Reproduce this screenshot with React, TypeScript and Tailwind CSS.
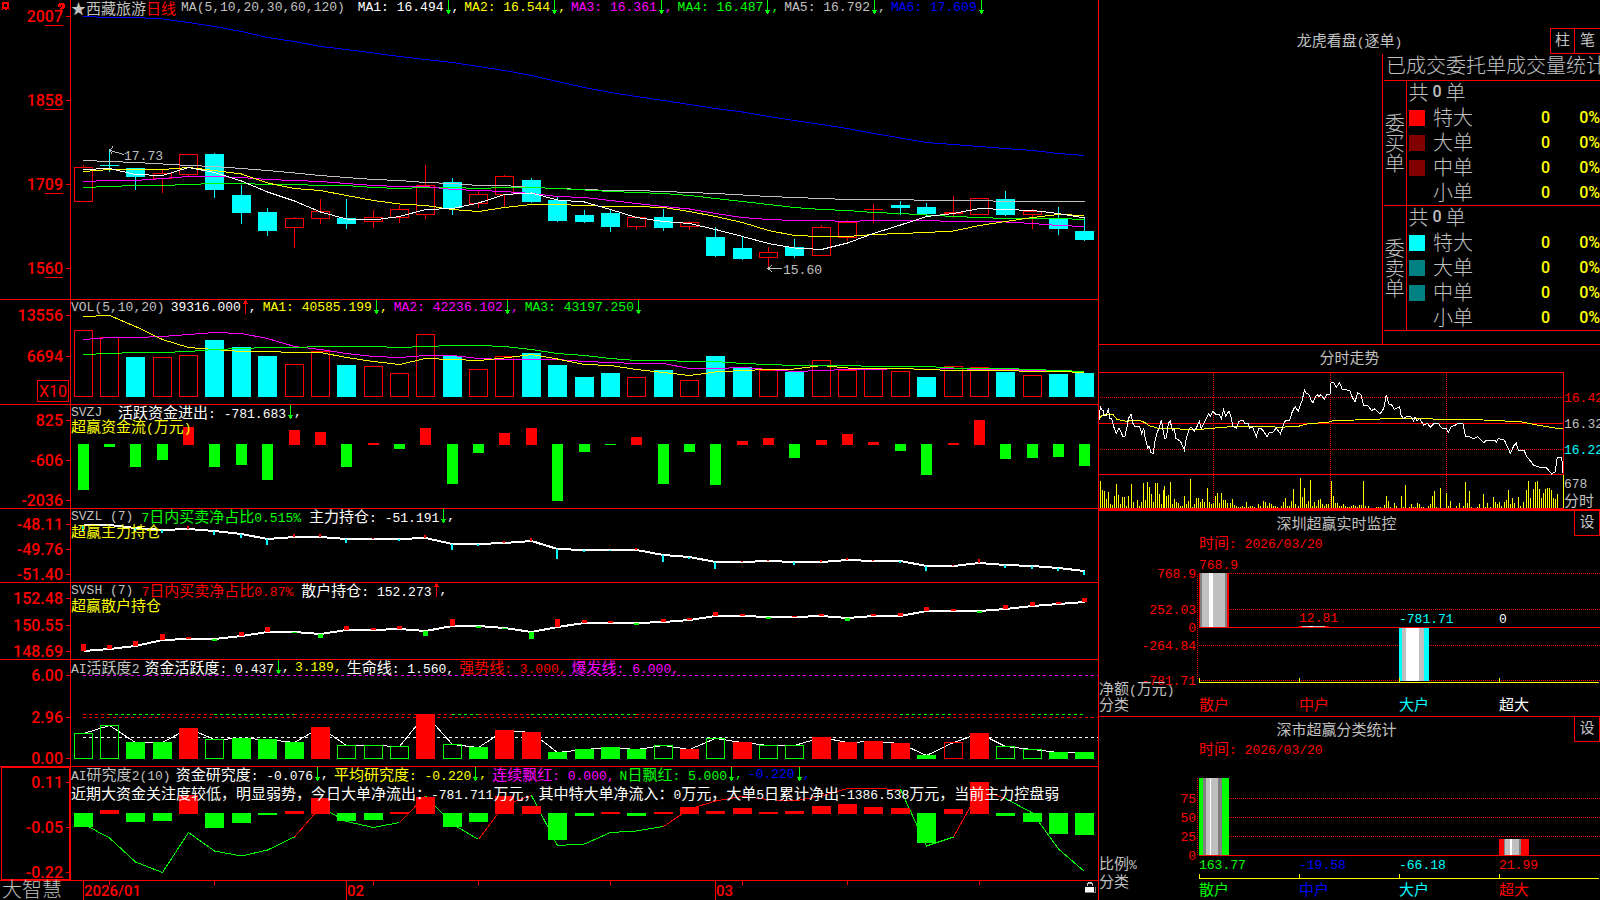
import React from "react";

const RED = "#ff0000";
const GREEN = "#00ff00";
const CYAN = "#00ffff";
const YELLOW = "#ffff00";
const MAGENTA = "#ff00ff";
const BLUE = "#0000ff";
const SILVER = "#c0c0c0";
const GRAY = "#808080";
const WHITE = "#ffffff";

const CJK = /([\u2e80-\u9fff\uff00-\uffef\u3000-\u303f\u2605]+)/;

/* ---------- text helpers ---------- */

/** Mixed text: full-width glyphs at 15px, half-width glyphs in a monospaced 13px. */
function Mix({ children }: { children: string }) {
  return (
    <>
      {children.split(CJK).filter(Boolean).map((part, i) =>
        CJK.test(part) ? (
          <span key={i} className="font-['Noto_Sans_CJK_SC',sans-serif] text-[15px]">{part}</span>
        ) : (
          <span key={i} className="font-['Liberation_Mono',monospace] text-[13px]">{part}</span>
        ),
      )}
    </>
  );
}

function SvgMix({ x, cy, fill, anchor = "start", children }: {
  x: number; cy: number; fill: string; anchor?: "start" | "end"; children: string;
}) {
  return (
    <text x={x} y={cy + 5} fill={fill} textAnchor={anchor} className="whitespace-pre">
      {children.split(CJK).filter(Boolean).map((part, i) =>
        CJK.test(part) ? (
          <tspan key={i} className="font-['Noto_Sans_CJK_SC',sans-serif] text-[15px]">{part}</tspan>
        ) : (
          <tspan key={i} className="font-['Liberation_Mono',monospace] text-[13px]">{part}</tspan>
        ),
      )}
    </text>
  );
}

function Arrow({ up = false }: { up?: boolean }) {
  return (
    <svg viewBox="0 0 8 15" className="inline-block h-[15px] w-2 shrink-0" shapeRendering="crispEdges">
      {up ? (
        <path d="M4 0h1v14h-1zM3 1h3v1h-3zM2 3h5v1h-5zM3 2h3v1h-3z" fill={RED} />
      ) : (
        <path d="M4 0h1v14h-1zM2 10h5v1h-5zM3 11h3v2h-3z" fill={GREEN} />
      )}
    </svg>
  );
}

type Item = { t: string; c: string; a?: "up" | "down"; end?: boolean };

const legendGaps = {
  tight: "flex h-[15px] items-center gap-[5px] leading-[15px]",
  wide: "flex h-[15px] items-center gap-[6px] leading-[15px]",
  wider: "flex h-[15px] items-center gap-2 leading-[15px]",
};

function Legend({ items, lead, gap = "tight", children }: {
  items: Item[]; lead?: React.ReactNode; gap?: keyof typeof legendGaps; children?: React.ReactNode;
}) {
  return (
    <div className="absolute left-0 top-0 whitespace-pre">
      <div className={legendGaps[gap]}>
        {lead}
        {items.map((it, i) => (
          <span key={i} className="flex items-center" style={{ color: it.c }}>
            <span className="flex items-baseline"><Mix>{it.t}</Mix></span>
            {it.a && <Arrow up={it.a === "up"} />}
            {it.a && !it.end && <Mix>,</Mix>}
          </span>
        ))}
      </div>
      {children}
    </div>
  );
}

function Caption({ children }: { children: string }) {
  return (
    <div className="flex h-[13px] items-center leading-[13px] text-[#ffff00]">
      <span className="flex items-baseline"><Mix>{children}</Mix></span>
    </div>
  );
}

/* ---------- chart helpers ---------- */

const cx = (i: number) => 83 + Math.floor(i * 26.36 + 0.16);
const points = (ys: number[]) => ys.map((y, i) => `${cx(i) + 0.5},${y}`).join(" ");

function Line({ ys, color, width = 1 }: { ys: number[]; color: string; width?: number }) {
  return <polyline points={points(ys)} fill="none" stroke={color} strokeWidth={width} />;
}

function Box({ i, top, bottom, half = 9, color, hollow }: {
  i: number; top: number; bottom: number; half?: number; color: string; hollow?: boolean;
}) {
  const x = cx(i) - half;
  const w = half * 2 + 1;
  return hollow ? (
    <rect x={x + 0.5} y={top + 0.5} width={w - 1} height={Math.max(bottom - top - 1, 1)} fill="none" stroke={color} />
  ) : (
    <rect x={x} y={top} width={w} height={Math.max(bottom - top, 1)} fill={color} />
  );
}

function Pane({ top, height, ticks, underline, axisExtra, legend, framed, children }: {
  top: number; height: number; ticks: [string, number][]; underline?: boolean; axisExtra?: React.ReactNode;
  legend: React.ReactNode; framed?: boolean; children: React.ReactNode;
}) {
  const inner = height - 1;
  return (
    <section className="flex border-b border-[#ff0000]">
      <svg
        viewBox={`0 ${top} 71 ${inner}`}
        style={{ height: inner }}
        className="w-[71px] shrink-0 overflow-visible"
        shapeRendering="crispEdges"
      >
        <path d={`M70.5 ${top}V${top + inner}`} stroke={RED} />
        {framed && <rect x="1.5" y={top + 0.5} width="68" height={inner - 1} fill="none" stroke={RED} />}
        {ticks.map(([label, y]) => (
          <g key={label}>
            <text x="63" y={y + 6} textAnchor="end" fill={RED} className="font-['Roboto',sans-serif] text-[16px] font-medium">
              {label}
            </text>
            <rect x="66" y={y} width="4" height="1" fill={RED} />
            {underline && <rect x="45" y={y + 9} width="18" height="1" fill={RED} />}
          </g>
        ))}
        {axisExtra}
      </svg>
      <div className="relative min-w-0 flex-1">
        <svg
          viewBox={`71 ${top} 1027 ${inner}`}
          preserveAspectRatio="none"
          style={{ height: inner }}
          className="block w-full"
          shapeRendering="crispEdges"
        >
          {children}
        </svg>
        {legend}
      </div>
    </section>
  );
}

/* ---------- data ---------- */

type Candle = [kind: "r" | "c", top: number, bottom: number, high: number, low: number];
const candles: Candle[] = [
  ["r", 167, 202, 165, 167], ["c", 165, 166, 149, 172], ["c", 168, 177, 168, 190], ["r", 173, 179, 169, 193],
  ["r", 154, 175, 154, 176], ["c", 154, 190, 153, 198], ["c", 195, 213, 185, 224], ["c", 212, 231, 208, 236],
  ["r", 218, 228, 217, 248], ["r", 211, 219, 199, 224], ["c", 218, 224, 199, 229], ["r", 217, 222, 210, 228],
  ["r", 209, 218, 205, 223], ["r", 185, 215, 165, 219], ["c", 182, 208, 178, 215], ["r", 194, 204, 191, 208],
  ["r", 176, 195, 175, 207], ["c", 180, 202, 178, 203], ["c", 200, 221, 197, 222], ["c", 215, 222, 210, 223],
  ["c", 213, 227, 209, 232], ["r", 217, 227, 216, 230], ["c", 217, 228, 209, 231], ["r", 222, 227, 221, 230],
  ["c", 237, 256, 227, 257], ["c", 248, 259, 237, 260], ["r", 252, 258, 247, 268], ["c", 247, 256, 239, 258],
  ["r", 227, 256, 225, 227], ["r", 222, 238, 220, 241], ["r", 209, 210, 204, 223], ["c", 205, 208, 201, 215],
  ["c", 207, 214, 203, 216], ["r", 212, 214, 196, 218], ["r", 198, 215, 198, 215], ["c", 199, 215, 191, 216],
  ["r", 211, 215, 209, 229], ["c", 219, 229, 207, 235], ["c", 231, 240, 217, 241],
];

const priceMa = {
  ma1: [169.5, 168.5, 174.5, 175.5, 167.5, 172.5, 181, 192, 201, 212, 219, 220, 216.5, 209.5, 208.5, 203, 194.5, 193, 200, 202, 209.5, 217.5, 221.5, 223.5, 229.5, 236.5, 243.5, 248, 249.5, 243, 233.5, 225, 216.5, 213.5, 208.5, 209.5, 210.5, 213.5, 218],
  ma2: [171.5, 169.5, 169.5, 169.5, 167.5, 170.5, 174, 183, 188.5, 190.5, 195.5, 200.5, 204, 205.5, 209.5, 211.5, 207.5, 204.5, 204.5, 205.5, 206.5, 206.5, 207.5, 211.5, 216.5, 222.5, 230.5, 235.5, 236.5, 236.5, 234.5, 233.5, 232.5, 231, 225.5, 221.5, 217.5, 214.5, 215.5],
  ma3: [181.5, 180.5, 180.5, 178.5, 176.5, 176.5, 177.5, 179.5, 180.5, 181.5, 183.5, 185.5, 186.5, 186.5, 189.5, 190.5, 191.5, 193.5, 196.5, 197.5, 200.5, 203.5, 206.5, 209, 213.5, 217.5, 219.5, 220.5, 220.5, 221.5, 220.5, 220.5, 220.5, 221.5, 221.5, 222, 223.5, 225.5, 226.5],
  ma4: [187.5, 186.5, 185.5, 185.5, 184.5, 183.5, 183.5, 184.5, 184.5, 185.5, 185.5, 187.5, 188.5, 187.5, 187.5, 188.5, 187.5, 187.5, 188.5, 190, 191.5, 192.5, 193.5, 195.5, 198.5, 201.5, 204.5, 207.5, 209.5, 210.5, 212.5, 213.5, 215, 216.5, 217.5, 218.5, 218.5, 218.5, 219.5],
  ma5: [160.5, 161.5, 162.5, 164, 165.5, 166.5, 168.5, 170.5, 173, 175.5, 177.5, 179.5, 180.5, 182.5, 183.5, 185.5, 185.5, 187.5, 188.5, 189.5, 190.5, 190.5, 191.5, 192.5, 193.5, 195, 196.5, 197.5, 198.5, 199.5, 199.5, 199.5, 200.5, 200.5, 200.5, 201.5, 201.5, 201.5, 201.5],
  ma6: [16.5, 17.5, 17.5, 19, 22.5, 26.5, 31.5, 37.5, 41.5, 46.5, 49.5, 53, 56.5, 59.5, 62.5, 66.5, 70.5, 75.5, 81.5, 87.5, 92.5, 96.5, 100.5, 104.5, 108.5, 112, 116.5, 120.5, 124.5, 128.5, 133.5, 138, 142.5, 144.5, 146.5, 148.5, 150.5, 153.5, 155.5],
};

const volume: [string, number][] = [
  ["r", 330], ["r", 337], ["c", 357], ["r", 357], ["r", 355], ["c", 340], ["c", 347], ["c", 356], ["r", 364], ["r", 351],
  ["c", 365], ["r", 366], ["r", 373], ["r", 334], ["c", 356], ["r", 369], ["r", 356], ["c", 353], ["c", 365], ["c", 377],
  ["c", 373], ["r", 377], ["c", 370], ["r", 380], ["c", 356], ["c", 367], ["r", 370], ["c", 372], ["r", 360], ["r", 370],
  ["r", 369], ["r", 371], ["c", 377], ["r", 366], ["r", 367], ["c", 372], ["r", 375], ["c", 374], ["c", 373],
];

const volMa = {
  ma1: [316.5, 315.5, 326.5, 339.5, 347.5, 349.5, 351.5, 351.5, 352.5, 352.5, 357.5, 361.5, 364.5, 358.5, 359.5, 360.5, 358, 354.5, 359, 364.5, 365.5, 369.5, 372.5, 375.5, 372, 370.5, 369.5, 369, 365.5, 368, 368.5, 368.5, 369.5, 370.5, 370.5, 370.5, 371.5, 371.5, 372.5],
  ma2: [339.5, 337.5, 337.5, 336.5, 334.5, 332.5, 333.5, 338.5, 346.5, 349.5, 353.5, 356.5, 357.5, 355.5, 355.5, 358.5, 359.5, 359.5, 359.5, 361.5, 362.5, 363.5, 363.5, 368.5, 368.5, 367.5, 369.5, 371.5, 370.5, 369.5, 369.5, 368.5, 369.5, 368.5, 369.5, 369.5, 370.5, 370.5, 371.5],
  ma3: [354.5, 353.5, 352.5, 352.5, 351.5, 349.5, 348.5, 347.5, 347.5, 346.5, 346.5, 346.5, 347.5, 346.5, 345.5, 345.5, 346.5, 349.5, 353.5, 355.5, 358.5, 360.5, 360.5, 361.5, 361.5, 363.5, 364.5, 365.5, 365.5, 365.5, 366.5, 366.5, 366.5, 368, 368.5, 368.5, 369.5, 370.5, 371.5],
};

const flow = [490, 447, 467, 460, 427, 467, 465, 480, 430, 432, 467, 443, 449, 428, 484, 453, 433, 428, 501, 452, 445, 437, 484, 452, 485, 441, 438, 458, 440, 434, 442, 451, 475, 443, 420, 459, 458, 457, 466];
const flowDown = new Set([20]);

const mainHold = [525, 525, 528, 530, 529, 531, 534, 539, 537, 537, 539, 539, 539, 538, 544, 544, 543, 541, 549, 550, 550, 550, 555, 557, 562, 562, 561, 562, 562, 560, 561, 561, 566, 566, 563, 565, 566, 568, 571];
const mainTicks = [-6, -1, -3, -3, 3, -4, -4, -6, 3, 3, -4, 1, -2, 3, -6, -2, 2, 3, -10, -2, -1, 2, -7, -2, -7, 1, 1, -3, 2, 2, 1, -2, -5, 1, 4, -3, -3, -3, -4];

const retailHold = [651, 649, 646, 640, 639, 639, 636, 632, 632, 634, 630, 630, 629, 631, 626, 626, 628, 632, 627, 623, 623, 623, 622, 620, 616, 616, 617, 617, 616, 618, 616, 616, 611, 611, 611, 609, 606, 604, 602];
const retailTicks = [7, 4, 5, 6, 2, -2, 4, 5, -1, -4, 4, 2, 3, -5, 7, -2, -1, -7, 8, 3, 2, -2, 3, 2, 4, 2, -2, 1, 2, -3, 2, 3, 4, 2, -2, 4, 4, 2, 4];

/* Upper case = filled bar, lower case = outlined bar. */
const activity: [string, number][] = [
  ["g", 733], ["g", 725], ["G", 742], ["G", 742], ["R", 728], ["g", 739], ["G", 738], ["G", 739], ["G", 742], ["R", 727],
  ["g", 745], ["g", 745], ["g", 746], ["R", 714], ["g", 744], ["G", 747], ["R", 730], ["R", 732], ["G", 752], ["G", 749],
  ["G", 747], ["G", 749], ["g", 745], ["R", 749], ["g", 738], ["R", 742], ["g", 745], ["g", 745], ["R", 737], ["R", 742],
  ["R", 741], ["R", 743], ["G", 755], ["r", 742], ["R", 733], ["g", 746], ["g", 749], ["G", 752], ["G", 752],
];
const activityTrend: [number, number, string][] = [
  [0, 1, RED], [1, 3, GREEN], [3, 5, RED], [5, 8, GREEN], [8, 14, RED], [14, 15, GREEN], [15, 17, RED],
  [17, 21, GREEN], [21, 31, RED], [31, 33, GREEN], [33, 36, RED], [36, 38, GREEN],
];

const research = [827, 810, 822, 821, 795, 828, 823, 815, 811, 798, 821, 820, 812, 797, 827, 822, 796, 806, 840, 816, 812, 816, 812, 807, 811, 808, 812, 811, 806, 804, 807, 808, 843, 809, 782, 816, 822, 834, 835];
const researchDown = new Set([1, 8, 12, 20, 22, 26, 27]);
const researchLine = [824, 838, 862, 872.5, 832.5, 851, 856, 850, 837, 807, 821.5, 827.5, 822.5, 796, 824, 839.5, 805, 795.5, 845.5, 844, 832.5, 831, 826.5, 809, 801, 796.5, 799.5, 801, 796, 788.5, 788.5, 789.5, 846, 837, 790, 798.5, 813, 849, 871.5];
const researchParts: [number, number, string][] = [
  [0, 8, GREEN], [8, 9, RED], [9, 12, GREEN], [12, 13, RED], [13, 15, GREEN], [15, 17, RED],
  [17, 22, GREEN], [22, 31, RED], [31, 33, GREEN], [33, 35, RED], [35, 38, GREEN],
];

/* ---------- left side panes ---------- */

function PricePane() {
  return (
    <Pane
      top={0}
      height={300}
      underline
      ticks={[["2007", 16], ["1858", 100], ["1709", 184], ["1560", 268]]}
      axisExtra={
        <>
          <path d="M3 3h5v5h-5z" fill="none" stroke={RED} strokeWidth="2" />
          <path d="M2 9h1v1h-1zM9 9h1v1h-1zM5 9h2v1h-2z" fill={RED} />
          <path d="M58 4h1v-1h5v1h1v4h-1v1h-2v2h-2v-3h1v-1h1v-2h-1v2h-3zM60 12h2v3h-2z" fill={RED} />
        </>
      }
      legend={
        <Legend
          lead={
            <span className="flex items-baseline text-[#c0c0c0]">
              <Mix>★西藏旅游</Mix>
              <span className="text-[#ff0000]"><Mix>日线</Mix></span>
            </span>
          }
          items={[
            { t: "MA(5,10,20,30,60,120) ", c: SILVER },
            { t: "MA1: 16.494", c: WHITE, a: "down" },
            { t: "MA2: 16.544", c: YELLOW, a: "down" },
            { t: "MA3: 16.361", c: MAGENTA, a: "down" },
            { t: "MA4: 16.487", c: GREEN, a: "down" },
            { t: "MA5: 16.792", c: SILVER, a: "down" },
            { t: "MA6: 17.609", c: BLUE, a: "down", end: true },
          ]}
        />
      }
    >
      {candles.map(([k, top, bottom, high, low], i) => {
        const color = k === "r" ? RED : CYAN;
        return (
          <g key={i}>
            {high < top && <rect x={cx(i)} y={high} width="1" height={top - high} fill={color} />}
            {low > bottom && <rect x={cx(i)} y={bottom} width="1" height={low - bottom} fill={color} />}
            <Box i={i} top={top} bottom={bottom} color={color} hollow={k === "r" && bottom - top > 1} />
          </g>
        );
      })}
      <Line ys={priceMa.ma6} color={BLUE} />
      <Line ys={priceMa.ma5} color={SILVER} />
      <Line ys={priceMa.ma4} color={GREEN} />
      <Line ys={priceMa.ma3} color={MAGENTA} />
      <Line ys={priceMa.ma2} color={YELLOW} />
      <Line ys={priceMa.ma1} color={WHITE} />
      <path d="M124 154.5L110 150.5M113 146.5L110 150.5L112 153.5" fill="none" stroke={SILVER} />
      <SvgMix x={124} cy={155} fill={SILVER}>17.73</SvgMix>
      <path d="M782 268.5H768M772 265L768 268.5L772 272" fill="none" stroke={SILVER} />
      <SvgMix x={783} cy={269} fill={SILVER}>15.60</SvgMix>
    </Pane>
  );
}

function VolumePane() {
  return (
    <Pane
      top={300}
      height={105}
      ticks={[["13556", 315], ["6694", 356]]}
      axisExtra={
        <>
          <rect x="37.5" y="380.5" width="31" height="21" fill="none" stroke={RED} />
          <text x="39" y="397" fill={RED} className="font-['Roboto',sans-serif] text-[16px]">X10</text>
        </>
      }
      legend={
        <Legend
          gap="wide"
          items={[
            { t: "VOL(5,10,20)", c: SILVER },
            { t: "39316.000", c: WHITE, a: "up" },
            { t: "MA1: 40585.199", c: YELLOW, a: "down" },
            { t: "MA2: 42236.102", c: MAGENTA, a: "down" },
            { t: "MA3: 43197.250", c: GREEN, a: "down", end: true },
          ]}
        />
      }
    >
      {volume.map(([k, top], i) => (
        <Box key={i} i={i} top={top} bottom={397} color={k === "r" ? RED : CYAN} hollow={k === "r"} />
      ))}
      <Line ys={volMa.ma2} color={MAGENTA} />
      <Line ys={volMa.ma1} color={YELLOW} />
      <Line ys={volMa.ma3} color={GREEN} />
    </Pane>
  );
}

function FlowPane() {
  return (
    <Pane
      top={405}
      height={104}
      ticks={[["825", 420], ["-606", 460], ["-2036", 500]]}
      legend={
        <Legend
          gap="wider"
          items={[
            { t: "SVZJ ", c: SILVER },
            { t: "活跃资金进出: -781.683", c: WHITE, a: "down" },
          ]}
        >
          <Caption>超赢资金流(万元)</Caption>
        </Legend>
      }
    >
      {flow.map((v, i) =>
        v > 445 || flowDown.has(i) ? (
          <Box key={i} i={i} top={444} bottom={v} half={5} color={GREEN} />
        ) : (
          <Box key={i} i={i} top={v} bottom={445} half={5} color={RED} />
        ),
      )}
    </Pane>
  );
}

function MainHoldPane() {
  return (
    <Pane
      top={509}
      height={74}
      ticks={[["-48.11", 524], ["-49.76", 549], ["-51.40", 574]]}
      legend={
        <Legend
          gap="wider"
          items={[
            { t: "SVZL (7)", c: SILVER },
            { t: "7日内买卖净占比0.515%", c: GREEN },
            { t: "主力持仓: -51.191", c: WHITE, a: "down" },
          ]}
        >
          <Caption>超赢主力持仓</Caption>
        </Legend>
      }
    >
      <Line ys={mainHold} color={WHITE} width={2} />
      {mainTicks.map((h, i) => (
        <rect
          key={i}
          x={cx(i) - 1}
          y={h > 0 ? mainHold[i] - h : mainHold[i]}
          width="2"
          height={Math.abs(h)}
          fill={h > 0 ? RED : CYAN}
        />
      ))}
    </Pane>
  );
}

function RetailHoldPane() {
  return (
    <Pane
      top={583}
      height={77}
      ticks={[["152.48", 598], ["150.55", 625], ["148.69", 651]]}
      legend={
        <Legend
          gap="wider"
          items={[
            { t: "SVSH (7)", c: SILVER },
            { t: "7日内买卖净占比0.87%", c: RED },
            { t: "散户持仓: 152.273", c: WHITE, a: "up" },
          ]}
        >
          <Caption>超赢散户持仓</Caption>
        </Legend>
      }
    >
      <Line ys={retailHold} color={WHITE} width={2} />
      {retailTicks.map((h, i) => (
        <rect
          key={i}
          x={cx(i) - 2}
          y={h > 0 ? retailHold[i] - h : retailHold[i]}
          width="5"
          height={Math.abs(h)}
          fill={h > 0 ? RED : GREEN}
        />
      ))}
    </Pane>
  );
}

function ActivityPane() {
  return (
    <Pane
      top={660}
      height={107}
      ticks={[["6.00", 675], ["2.96", 717], ["0.00", 758]]}
      legend={
        <Legend
          items={[
            { t: "AI活跃度2", c: SILVER },
            { t: "资金活跃度: 0.437", c: WHITE, a: "down" },
            { t: "3.189,", c: YELLOW },
            { t: "生命线: 1.560,", c: WHITE },
            { t: "强势线: 3.000,", c: RED },
            { t: "爆发线: 6.000,", c: MAGENTA },
          ]}
        />
      }
    >
      <path d="M83 675.5H1098" stroke={MAGENTA} strokeDasharray="3 3" />
      <path d="M83 717.5H1098" stroke={RED} strokeDasharray="3 3" />
      {activityTrend.map(([a, b, c]) => (
        <path key={a} d={`M${cx(a)} 714.5H${cx(b)}`} stroke={c} strokeDasharray="3 3" />
      ))}
      <path d="M83 737.5H1098" stroke={WHITE} strokeDasharray="3 3" />
      <Line ys={activity.map(([, y]) => y + 0.5)} color={WHITE} />
      {activity.map(([k, top], i) => (
        <Box
          key={i}
          i={i}
          top={top}
          bottom={759}
          color={k.toLowerCase() === "r" ? RED : GREEN}
          hollow={k === k.toLowerCase()}
        />
      ))}
    </Pane>
  );
}

function ResearchPane() {
  return (
    <Pane
      top={767}
      height={114}
      framed
      ticks={[["0.11", 782], ["-0.05", 827], ["-0.22", 872]]}
      legend={
        <Legend
          items={[
            { t: "AI研究度2(10)", c: SILVER },
            { t: "资金研究度: -0.076", c: WHITE, a: "down" },
            { t: "平均研究度: -0.220", c: YELLOW, a: "down" },
            { t: "连续飘红: 0.000,", c: MAGENTA },
            { t: "N日飘红: 5.000", c: GREEN, a: "down" },
            { t: "-0.220", c: BLUE, a: "down" },
          ]}
        >
          <div className="mt-1 flex h-[15px] items-center leading-[15px] text-white">
            <span className="flex items-baseline">
              <Mix>近期大资金关注度较低，明显弱势，今日大单净流出：-781.711万元，其中特大单净流入：0万元，大单5日累计净出-1386.538万元，当前主力控盘弱</Mix>
            </span>
          </div>
        </Legend>
      }
    >
      {researchParts.map(([a, b, c]) => (
        <polyline
          key={a}
          points={researchLine.slice(a, b + 1).map((y, j) => `${cx(a + j) + 0.5},${y}`).join(" ")}
          fill="none"
          stroke={c}
        />
      ))}
      {research.map((v, i) =>
        v > 813 && !researchDown.has(i) ? (
          <Box key={i} i={i} top={813} bottom={v} color={GREEN} />
        ) : (
          <Box key={i} i={i} top={v} bottom={814} color={RED} />
        ),
      )}
    </Pane>
  );
}

function TimeAxis() {
  const months: [string, number][] = [["2026/01", 83], ["02", 346], ["03", 715]];
  return (
    <footer className="flex h-[19px]">
      <div className="w-[71px] shrink-0 whitespace-nowrap pl-[2px] font-['Noto_Sans_CJK_SC',sans-serif] text-[20px] font-light leading-[16px] text-[#c0c0c0]">
        大智慧
      </div>
      <svg viewBox="71 881 1027 19" preserveAspectRatio="none" className="h-[19px] min-w-0 flex-1" shapeRendering="crispEdges">
        {[109, 214, 373, 478, 610, 742, 847, 979].map((x) => (
          <rect key={x} x={x} y="881" width="1" height="4" fill={RED} />
        ))}
        {months.map(([m, x]) => (
          <g key={m}>
            <rect x={x} y="881" width="1" height="19" fill={RED} />
            <text x={x + 1} y="896" fill={RED} className="font-['Roboto',sans-serif] text-[15px] font-medium">{m}</text>
          </g>
        ))}
        <path d="M1087 886v-3h1v-1h4v1h1v3h-1v-2h-4v2z" fill={SILVER} />
        <rect x="1085" y="887" width="9" height="5" fill={WHITE} />
        <path d="M1085 893h11v-6h-1v5h-10z" fill={GRAY} />
      </svg>
    </footer>
  );
}

/* ---------- right side ---------- */

const orderGroups = [
  { name: "委买单", colors: ["#ff0000", "#800000", "#800000", "transparent"] },
  { name: "委卖单", colors: ["#00ffff", "#008080", "#008080", "transparent"] },
];
const orderSizes = ["特大", "大单", "中单", "小单"];

function OrderStats() {
  return (
    <section className="flex h-[345px] flex-col border-b border-[#ff0000] text-[#c0c0c0]">
      <header className="mt-7 grid h-[26px] shrink-0 grid-cols-[1fr_auto_1fr] items-start">
        <h2 className="col-start-2 flex h-[26px] items-baseline leading-[24px]"><Mix>龙虎看盘(逐单)</Mix></h2>
        <div className="flex justify-self-end">
          <button type="button" className="h-[26px] w-[25px] border border-[#ff0000] pb-1 leading-[18px]"><Mix>柱</Mix></button>
          <button type="button" className="h-[26px] w-[25px] border-y border-[#ff0000] pb-1 leading-[18px]"><Mix>笔</Mix></button>
        </div>
      </header>
      <div className="ml-auto w-[218px] flex-1 overflow-hidden border-l border-[#ff0000] pl-px font-['Noto_Sans_CJK_SC',sans-serif] text-[20px] font-light">
        <h3 className="h-[26px] whitespace-nowrap pl-[2px] leading-[22px]">已成交委托单成交量统计</h3>
        <table className="w-full table-fixed border-collapse leading-[22px]">
          <colgroup>
            <col className="w-[22px]" />
            <col className="w-[27px]" />
            <col />
            <col className="w-[50px]" />
            <col className="w-[50px]" />
          </colgroup>
          {orderGroups.map((g) => (
            <tbody key={g.name} className="border-y border-[#ff0000]">
              <tr className="h-[25px]">
                <th rowSpan={5} className="border-r border-[#ff0000] p-0 text-center align-middle font-light leading-[20px]">
                  {g.name.split("").map((ch) => <span key={ch} className="block">{ch}</span>)}
                </th>
                <td colSpan={4} className="p-0 pl-[2px] align-top">
                  <span className="flex h-[22px] items-center whitespace-nowrap">
                    共<span className="px-1 font-['Roboto',sans-serif] text-[16px] font-medium">0</span>单
                  </span>
                </td>
              </tr>
              {orderSizes.map((s, i) => (
                <tr key={s} className="h-[25px]">
                  <td className="p-0 pl-[2px]">
                    <span className="block h-4 w-4" style={{ backgroundColor: g.colors[i] }} />
                  </td>
                  <td className="p-0 align-top">
                    <span className="block h-[22px] whitespace-nowrap">{s}</span>
                  </td>
                  <td className="p-0 align-middle font-['Roboto',sans-serif] text-[16px] font-medium text-[#ffff00]">
                    <span className="block h-[22px] text-right">0</span>
                  </td>
                  <td className="p-0 align-middle font-['Roboto',sans-serif] text-[16px] font-medium text-[#ffff00]">
                    <span className="block h-[22px] text-right">0%</span>
                  </td>
                </tr>
              ))}
            </tbody>
          ))}
        </table>
      </div>
    </section>
  );
}

/* Samples on a grid of thirds of a pixel, measured from the chart's left edge and top. */
const intraday = "12,240 16,200 22,212 25,212 27,228 34,226 40,209 45,236 50,236 58,266 64,281 72,264 84,290 90,288 96,260 100,236 108,223 114,250 120,260 134,260 140,281 146,264 150,290 158,324 162,318 168,338 175,340 180,304 188,272 192,268 199,240 204,270 209,295 214,294 220,250 226,244 232,272 238,268 243,296 256,303 268,330 275,290 282,270 288,260 298,274 304,264 313,244 319,266 331,240 340,222 346,228 354,214 362,222 372,222 379,236 386,209 392,228 402,213 408,232 414,260 424,264 432,244 443,240 450,250 460,250 464,264 472,260 484,290 492,264 502,268 516,290 524,276 534,276 544,264 556,281 562,266 568,246 576,240 584,242 590,220 600,200 610,214 618,188 622,180 628,150 634,160 642,164 648,180 654,188 662,170 666,164 672,170 678,164 688,178 695,164 705,162 708,128 716,128 724,142 733,128 742,148 756,150 764,150 770,168 780,186 788,158 798,164 806,196 818,196 830,212 838,206 855,222 866,206 874,164 882,192 892,196 898,208 914,200 918,226 926,236 934,230 948,230 956,244 960,232 966,242 974,236 986,256 998,250 1006,262 1018,250 1030,250 1040,264 1054,266 1060,278 1068,260 1080,256 1090,250 1104,252 1111,288 1124,290 1136,296 1148,290 1166,308 1174,300 1200,300 1204,308 1210,296 1228,300 1246,340 1256,318 1264,310 1270,330 1288,332 1295,350 1306,362 1316,376 1334,382 1352,382 1362,392 1370,402 1380,396 1387,352 1400,352 1404,398";
const average = "12,240 20,226 34,224 54,224 66,238 96,244 110,241 134,241 150,248 162,257 186,264 240,266 270,268 320,268 340,265 380,263 410,259 520,259 550,262 610,259 640,251 700,247 715,242 780,240 880,236 1010,236 1020,238 1155,238 1165,240 1230,243 1280,246 1310,252 1350,259 1380,264 1404,266";
const ticksVolume = "16,423 22,451 28,453 34,477 40,456 46,491 52,494 58,468 64,432 70,466 76,491 82,472 88,471 94,497 100,468 108,432 114,485 120,503 127,480 133,499 139,487 145,429 151,480 157,426 163,441 169,461 175,486 181,429 187,429 193,463 199,491 205,450 208,438 214,468 220,464 226,426 232,491 238,478 244,486 250,490 256,499 262,499 268,468 274,491 280,483 286,417 292,501 298,491 304,474 310,474 316,485 322,478 328,485 337,444 343,487 349,491 355,488 361,468 367,459 373,488 379,459 385,480 391,480 397,490 406,490 412,477 418,495 424,498 430,501 436,500 442,498 448,500 454,486 460,501 466,499 472,499 478,501 484,503 490,491 496,497 505,483 511,486 517,497 523,488 529,491 535,497 541,499 547,500 553,503 559,498 565,487 571,474 577,497 583,499 589,483 595,447 601,491 610,497 616,414 622,472 628,444 634,491 640,484 646,420 652,497 658,486 664,497 670,480 676,478 682,491 688,497 694,491 700,491 709,423 715,468 721,488 727,490 733,497 739,499 745,493 751,498 757,500 763,500 769,497 775,494 781,499 787,500 793,495 799,495 805,423 811,499 820,499 832,503 844,500 850,500 856,501 862,503 868,495 874,468 880,483 886,500 898,489 904,497 910,504 919,468 925,500 931,435 937,503 943,501 949,491 955,500 961,501 967,488 973,491 979,500 985,502 991,503 1000,497 1006,491 1012,469 1018,453 1024,502 1036,444 1054,459 1060,497 1066,483 1075,503 1084,499 1093,488 1105,497 1111,426 1117,489 1123,453 1129,500 1147,502 1153,491 1165,462 1171,500 1177,488 1186,500 1195,471 1201,485 1207,491 1213,485 1219,497 1228,486 1234,479 1240,450 1246,491 1252,474 1258,488 1270,471 1276,497 1285,485 1294,450 1300,423 1306,474 1314,447 1321,426 1327,423 1333,447 1339,474 1345,459 1351,447 1357,444 1363,444 1369,450 1375,474 1381,477 1387,462 1404,405";

const parse = (s: string) =>
  s.split(" ").map((p) => {
    const [x, y] = p.split(",").map(Number);
    return [1095 + x / 3, 340 + y / 3];
  });

function IntradayPanel() {
  return (
    <section className="border-b border-[#ff0000] text-[#c0c0c0]">
      <h2 className="h-[27px] text-center leading-[24px]"><Mix>分时走势</Mix></h2>
      <svg viewBox="1099 372 501 137" className="block h-[137px] w-full" shapeRendering="crispEdges">
        <g fill="none" stroke={RED}>
          <path d="M1099 372.5H1563.5V474.5H1099M1099 423.5H1563" />
          <path d="M1100 397.5H1563M1100 449.5H1563" strokeDasharray="1 1" />
          <path d="M1213.5 373V508M1330.5 373V508M1446.5 373V508" strokeDasharray="1 1" />
        </g>
        {parse(ticksVolume).map(([x, y], i) => (
          <rect key={i} x={Math.floor(x)} y={Math.round(y)} width="1" height={509 - Math.round(y)} fill={YELLOW} />
        ))}
        <rect x="1099" y="508" width="465" height="1" fill={RED} />
        <polyline points={parse(average).map((p) => p.join(",")).join(" ")} fill="none" stroke={YELLOW} />
        <polyline points={parse(intraday).map((p) => p.join(",")).join(" ")} fill="none" stroke={WHITE} />
        <SvgMix x={1564} cy={397} fill={RED}>16.42</SvgMix>
        <SvgMix x={1564} cy={423} fill={SILVER}>16.32</SvgMix>
        <SvgMix x={1564} cy={449} fill={CYAN}>16.22</SvgMix>
        <SvgMix x={1564} cy={483} fill={SILVER}>678</SvgMix>
        <SvgMix x={1564} cy={501} fill={SILVER}>分时</SvgMix>
      </svg>
    </section>
  );
}

/* Each stripe is [start, colour] measured from the bar's left edge; every bar is 30px wide. */
function StripedBar({ x, y, h, stripes }: { x: number; y: number; h: number; stripes: [number, string][] }) {
  return (
    <g>
      {stripes.map(([s, c], i) => (
        <rect key={s} x={x + s} y={y} width={(stripes[i + 1]?.[0] ?? 30) - s} height={h} fill={c} />
      ))}
    </g>
  );
}

function PanelHeader({ title }: { title: string }) {
  return (
    <header className="flex h-[25px] text-[#c0c0c0]">
      <h2 className="flex-1 text-center leading-[23px]"><Mix>{title}</Mix></h2>
      <button type="button" className="h-[25px] w-[26px] border-x border-b border-[#ff0000] pb-1 leading-[18px]"><Mix>设</Mix></button>
    </header>
  );
}

function YellowAxis({ y }: { y: number }) {
  return (
    <path
      d={`M1199.5 ${y - 4}V${y + 0.5}H1599M1299.5 ${y - 4}V${y}M1399.5 ${y - 4}V${y}M1499.5 ${y - 4}V${y}`}
      fill="none"
      stroke={YELLOW}
    />
  );
}

function MonitorPanel() {
  return (
    <section className="border-b border-t border-[#ff0000]">
      <PanelHeader title="深圳超赢实时监控" />
      <svg viewBox="1099 536 501 180" className="block h-[180px] w-full" shapeRendering="crispEdges">
        <SvgMix x={1199} cy={543} fill={RED}>时间: 2026/03/20</SvgMix>
        <g fill="none" stroke={RED}>
          <path d="M1197.5 574V680M1229 573.5H1600M1229 609.5H1600M1199 645.5H1600M1199 680.5H1600" strokeDasharray="1 1" />
        </g>
        <StripedBar
          x={1199}
          y={573}
          h={54}
          stripes={[[0, RED], [1, GRAY], [3, SILVER], [10, WHITE], [14, SILVER], [26, GRAY], [28, RED]]}
        />
        <StripedBar x={1299} y={626} h={1} stripes={[[0, RED], [3, SILVER], [10, WHITE], [14, SILVER], [26, RED]]} />
        <StripedBar x={1399} y={628} h={53} stripes={[[0, CYAN], [3, SILVER], [7, WHITE], [20, SILVER], [25, CYAN]]} />
        <rect x="1199" y="627" width="401" height="1" fill={RED} />
        <YellowAxis y={682} />
        {([["768.9", 573], ["252.03", 609], ["0", 627], ["-264.84", 645], ["-781.71", 680]] as [string, number][]).map(([t, y]) => (
          <SvgMix key={t} x={1196} cy={y} fill={RED} anchor="end">{t}</SvgMix>
        ))}
        <SvgMix x={1199} cy={564} fill={RED}>768.9</SvgMix>
        <SvgMix x={1299} cy={617} fill={RED}>12.81</SvgMix>
        <SvgMix x={1399} cy={618} fill={CYAN}>-781.71</SvgMix>
        <SvgMix x={1499} cy={618} fill={WHITE}>0</SvgMix>
        <SvgMix x={1099} cy={689} fill={SILVER}>净额(万元)</SvgMix>
        <SvgMix x={1099} cy={705} fill={SILVER}>分类</SvgMix>
        <SvgMix x={1199} cy={705} fill={RED}>散户</SvgMix>
        <SvgMix x={1299} cy={705} fill={RED}>中户</SvgMix>
        <SvgMix x={1399} cy={705} fill={CYAN}>大户</SvgMix>
        <SvgMix x={1499} cy={705} fill={WHITE}>超大</SvgMix>
      </svg>
    </section>
  );
}

function CategoryPanel() {
  return (
    <section>
      <PanelHeader title="深市超赢分类统计" />
      <svg viewBox="1099 742 501 158" className="block h-[158px] w-full" shapeRendering="crispEdges">
        <SvgMix x={1199} cy={749} fill={RED}>时间: 2026/03/20</SvgMix>
        <path
          d="M1197.5 778V856M1229 798.5H1600M1229 817.5H1600M1229 836.5H1600"
          fill="none"
          stroke={RED}
          strokeDasharray="1 1"
        />
        <rect x="1199" y="855" width="401" height="1" fill={RED} />
        <StripedBar
          x={1199}
          y={778}
          h={77}
          stripes={[[0, GREEN], [4, GRAY], [7, SILVER], [11, WHITE], [12, SILVER], [19, GRAY], [23, GREEN]]}
        />
        <StripedBar
          x={1499}
          y={839}
          h={16}
          stripes={[[0, RED], [5, GRAY], [6, SILVER], [11, WHITE], [13, SILVER], [20, GRAY], [22, RED]]}
        />
        <YellowAxis y={878} />
        {([["75", 798], ["50", 817], ["25", 836], ["0", 855]] as [string, number][]).map(([t, y]) => (
          <SvgMix key={t} x={1196} cy={y} fill={RED} anchor="end">{t}</SvgMix>
        ))}
        <SvgMix x={1199} cy={864} fill={GREEN}>163.77</SvgMix>
        <SvgMix x={1299} cy={864} fill={BLUE}>-19.58</SvgMix>
        <SvgMix x={1399} cy={864} fill={CYAN}>-66.18</SvgMix>
        <SvgMix x={1499} cy={864} fill={RED}>21.99</SvgMix>
        <SvgMix x={1099} cy={864} fill={SILVER}>比例%</SvgMix>
        <SvgMix x={1099} cy={882} fill={SILVER}>分类</SvgMix>
        <SvgMix x={1199} cy={890} fill={GREEN}>散户</SvgMix>
        <SvgMix x={1299} cy={890} fill={BLUE}>中户</SvgMix>
        <SvgMix x={1399} cy={890} fill={CYAN}>大户</SvgMix>
        <SvgMix x={1499} cy={890} fill={RED}>超大</SvgMix>
      </svg>
    </section>
  );
}

export default function App() {
  return (
    <div className="flex min-h-screen overflow-hidden bg-black">
      <main className="min-w-0 flex-1 border-r border-[#ff0000]">
        <PricePane />
        <VolumePane />
        <FlowPane />
        <MainHoldPane />
        <RetailHoldPane />
        <ActivityPane />
        <ResearchPane />
        <TimeAxis />
      </main>
      <aside className="w-[501px] shrink-0">
        <OrderStats />
        <IntradayPanel />
        <MonitorPanel />
        <CategoryPanel />
      </aside>
    </div>
  );
}
